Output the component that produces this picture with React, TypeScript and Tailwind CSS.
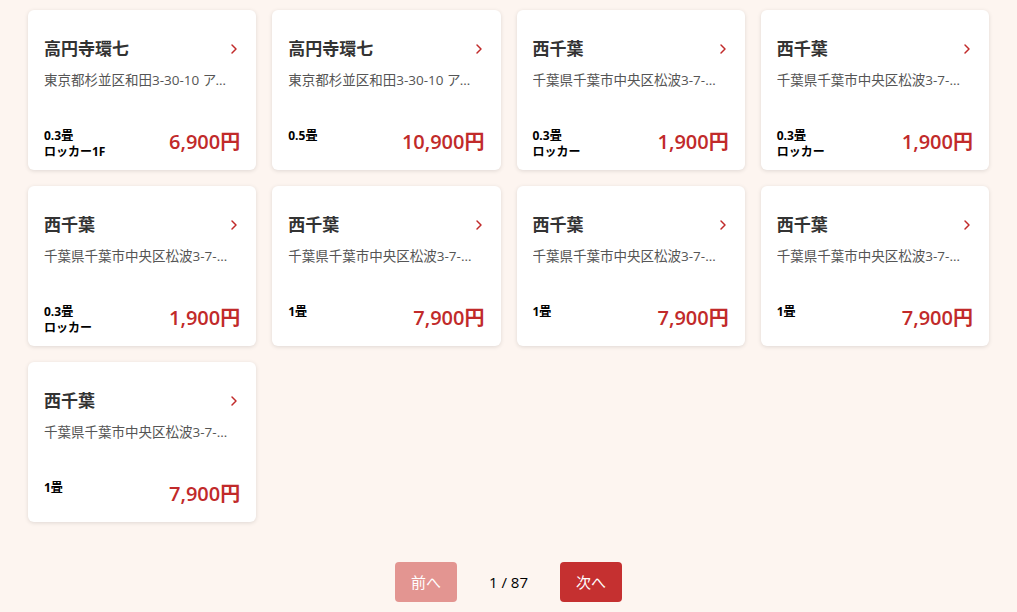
import { ChevronRight } from "lucide-react";

interface Room {
  name: string;
  address: string;
  size: string;
  note?: string;
  price: string;
}

const chiba = "千葉県千葉市中央区松波3-7-12 ニシチバビル";

const rooms: Room[] = [
  { name: "高円寺環七", address: "東京都杉並区和田3-30-10 アーバンハイツ", size: "0.3畳", note: "ロッカー1F", price: "6,900円" },
  { name: "高円寺環七", address: "東京都杉並区和田3-30-10 アーバンハイツ", size: "0.5畳", price: "10,900円" },
  { name: "西千葉", address: chiba, size: "0.3畳", note: "ロッカー", price: "1,900円" },
  { name: "西千葉", address: chiba, size: "0.3畳", note: "ロッカー", price: "1,900円" },
  { name: "西千葉", address: chiba, size: "0.3畳", note: "ロッカー", price: "1,900円" },
  { name: "西千葉", address: chiba, size: "1畳", price: "7,900円" },
  { name: "西千葉", address: chiba, size: "1畳", price: "7,900円" },
  { name: "西千葉", address: chiba, size: "1畳", price: "7,900円" },
  { name: "西千葉", address: chiba, size: "1畳", price: "7,900円" },
];

function RoomCard({ room }: { room: Room }) {
  return (
    <div className="bg-white rounded-md shadow-[0_1px_4px_rgba(0,0,0,0.12)] h-[160px] flex flex-col px-4 pt-6 pb-[10px]">
      <div className="h-[30px] flex items-center justify-between">
        <h2 className="text-[17px] font-semibold text-[#333]">{room.name}</h2>
        <ChevronRight size={16} strokeWidth={2.2} className="text-[#c12a2a] -mr-[2px]" />
      </div>
      <p className="mt-[6px] text-[13.5px] leading-5 text-[#555] truncate pr-2">{room.address}</p>
      <div className="mt-auto h-8 flex items-start justify-between">
        <div className="text-[12px] leading-4 font-bold text-black">
          <p>{room.size}</p>
          {room.note && <p>{room.note}</p>}
        </div>
        <p className="text-[20px] leading-7 font-semibold text-[#c12a2a]">{room.price}</p>
      </div>
    </div>
  );
}

export default function App() {
  return (
    <div
      className="min-h-[612px] bg-[#fdf5f0] px-7 pt-[10px] pb-[10px]"
      style={{ fontFamily: '"Open Sans", "Noto Sans CJK JP", sans-serif' }}
    >
      <div className="grid grid-cols-4 gap-4">
        {rooms.map((room, i) => (
          <RoomCard key={i} room={room} />
        ))}
      </div>
      <div className="mt-10 flex items-center justify-center gap-8">
        <button className="h-10 px-4 rounded bg-[#e39591] text-white text-[15px]" disabled>
          前へ
        </button>
        <span className="text-[15px] text-black">1 / 87</span>
        <button className="h-10 px-4 rounded bg-[#c53030] text-white text-[15px]">次へ</button>
      </div>
    </div>
  );
}
